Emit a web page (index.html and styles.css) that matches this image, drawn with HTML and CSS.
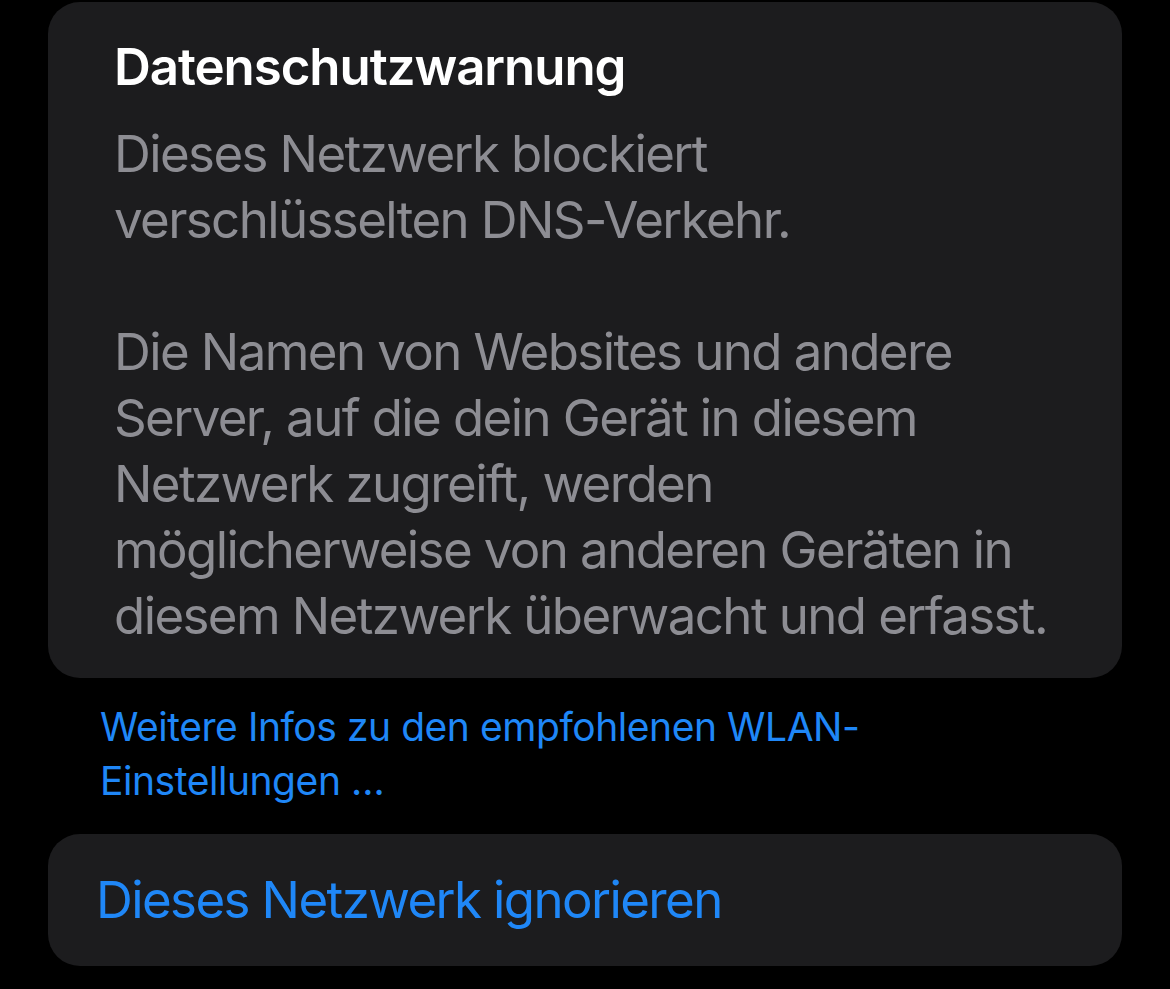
FILE: index.html
```html
<!DOCTYPE html>
<html lang="de">
<head>
    <meta charset="UTF-8">
    <meta name="viewport" content="width=device-width, initial-scale=1.0">
    <title>WLAN - Datenschutzwarnung</title>
    <link rel="stylesheet" href="styles.css">
</head>
<body>
    <div class="screen">
        <!-- Warning card -->
        <section class="card warning">
            <h2 class="warning-title">Datenschutzwarnung</h2>
            <p class="warning-text">Dieses Netzwerk blockiert<br>verschlüsselten DNS-Verkehr.</p>
            <p class="warning-text">Die Namen von Websites und andere<br>Server, auf die dein Gerät in diesem<br>Netzwerk zugreift, werden<br>möglicherweise von anderen Geräten in<br>diesem Netzwerk überwacht und erfasst.</p>
        </section>

        <a class="footer-link" href="#">Weitere Infos zu den empfohlenen WLAN-<br>Einstellungen …</a>

        <!-- Forget network -->
        <section class="card action">
            <button class="action-button">Dieses Netzwerk ignorieren</button>
        </section>
    </div>
</body>
</html>
```

FILE: styles.css
```css
body {
    margin: 0;
    background: #000;
    font-family: Inter, "Noto Sans", sans-serif;
    -webkit-font-smoothing: antialiased;
}
.screen {
    display: flex;
    flex-direction: column;
    padding: 2px 48px 0;
}
.card {
    background: #1c1c1e;
    border-radius: 32px;
}

/* Warning card */
.warning {
    padding: 32px 40px 29px 66px;
}
.warning-title {
    margin: 0 0 21px;
    font-size: 51px;
    line-height: 66px;
    font-weight: 600;
    letter-spacing: -1.05px;
    color: #fff;
}
.warning-text {
    margin: 0;
    font-size: 51px;
    line-height: 66px;
    letter-spacing: -1.6px;
    white-space: nowrap;
    color: #8d8d93;
}
.warning-text + .warning-text {
    margin-top: 66px;
}

/* Footer link */
.footer-link {
    display: block;
    margin: 22px 0 26px 52px;
    font-size: 39px;
    line-height: 54px;
    letter-spacing: -0.45px;
    color: #1f87f7;
    text-decoration: none;
}

/* Action card */
.action {
    padding: 33px 48px;
}
.action-button {
    display: block;
    padding: 0;
    border: none;
    background: none;
    font-family: inherit;
    font-size: 51px;
    line-height: 66px;
    letter-spacing: -1.6px;
    color: #1f87f7;
    cursor: pointer;
}
```
